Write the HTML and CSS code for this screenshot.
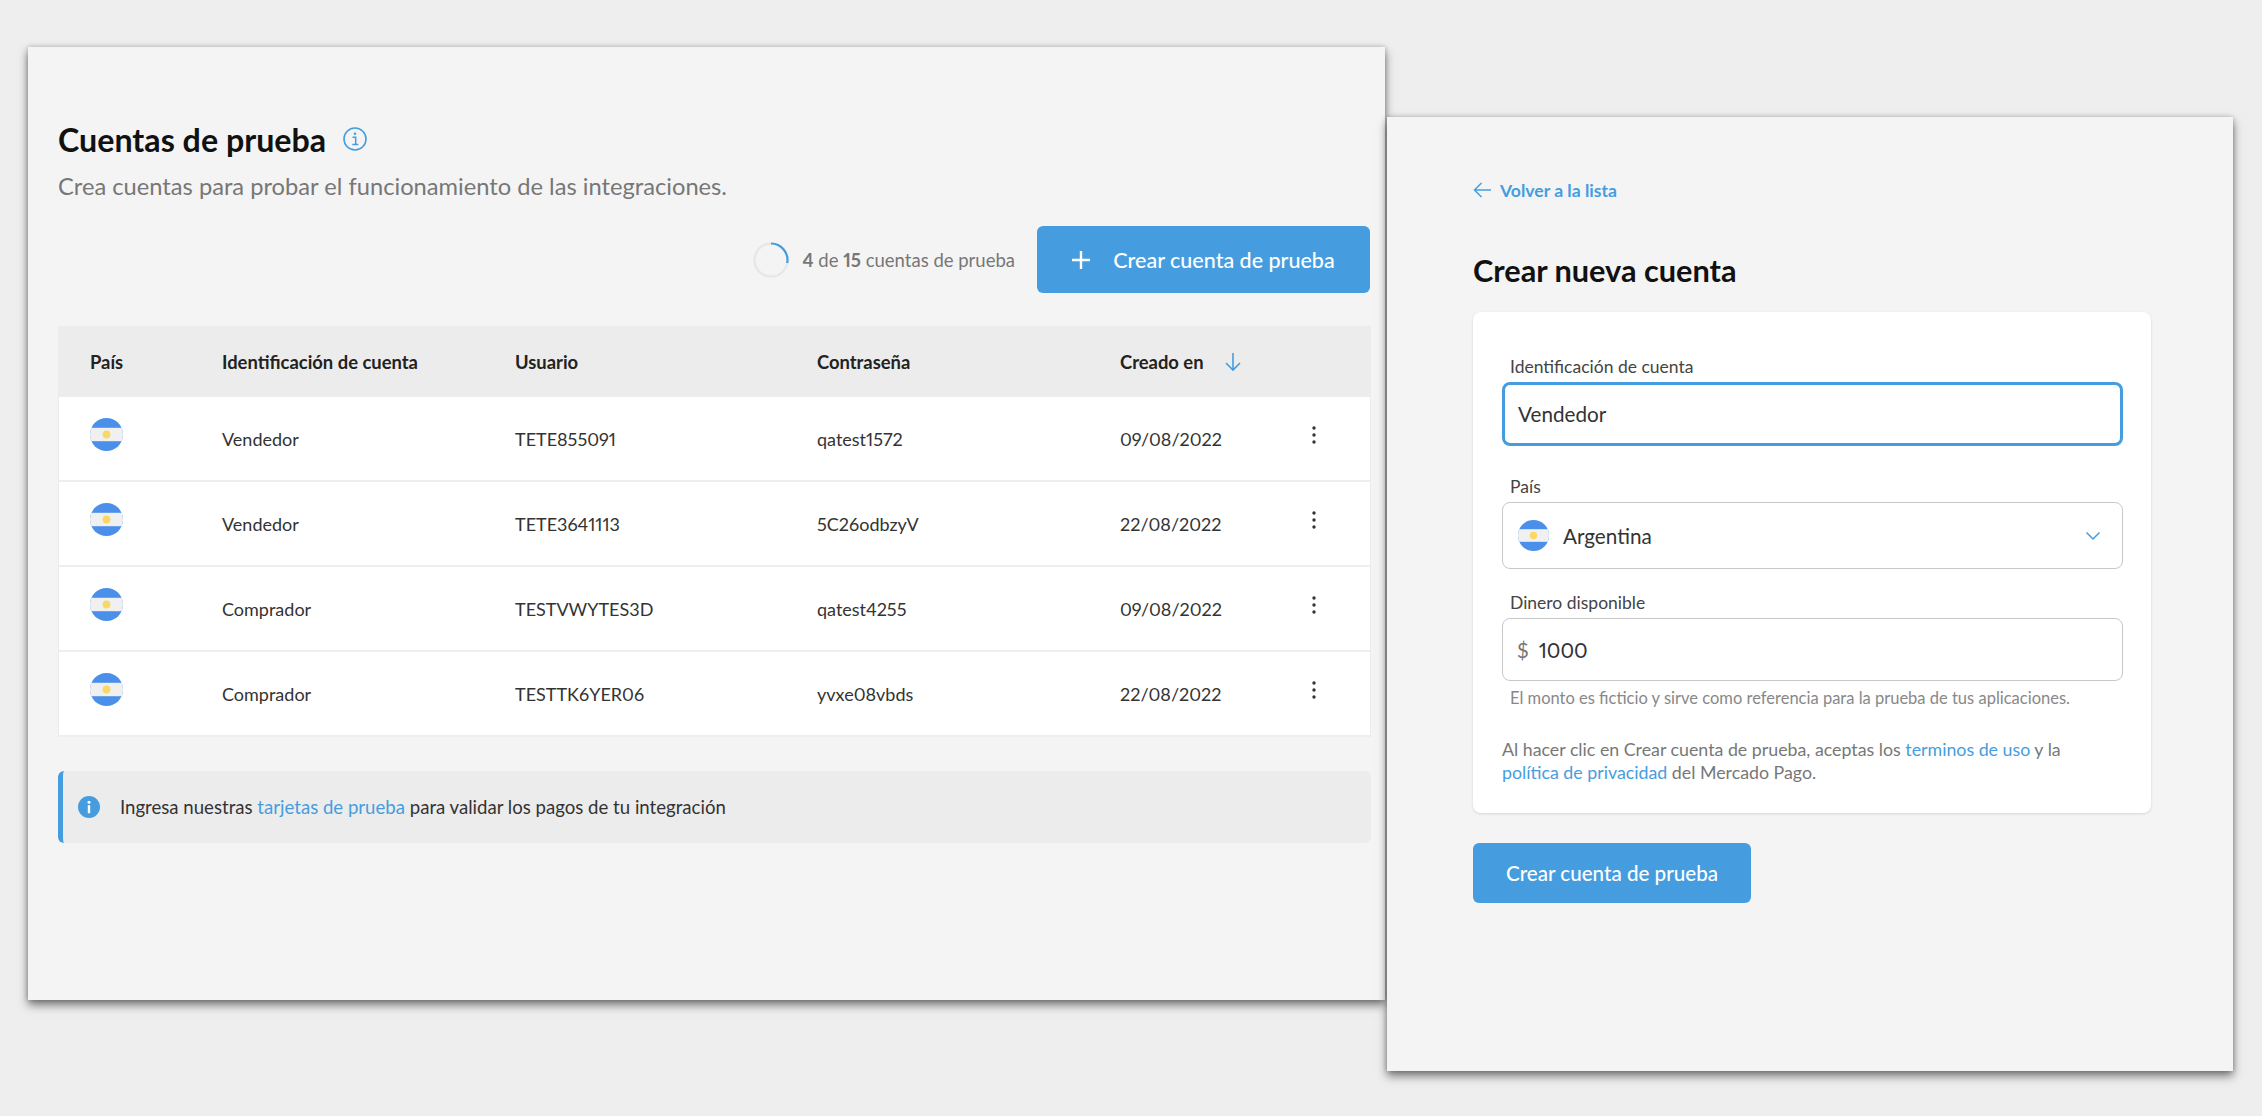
FILE: index.html
```html
<!DOCTYPE html>
<html lang="es">
<head>
  <meta charset="UTF-8">
  <title>Cuentas de prueba</title>
  <link rel="stylesheet" href="styles.css">
</head>
<body>
  <svg class="sprite" width="0" height="0">
    <symbol id="flag" viewBox="0 0 32 32">
      <clipPath id="flagClip"><circle cx="16" cy="16" r="16"/></clipPath>
      <g clip-path="url(#flagClip)">
        <rect width="32" height="32" fill="#4a8fe9"/>
        <rect y="9.500" width="32" height="13" fill="#f0f0f0"/>
      </g>
      <circle cx="16" cy="16" r="3.8" fill="#fbd765"/>
    </symbol>
    <symbol id="dots" viewBox="0 0 16 24">
      <circle cx="8" cy="5" r="1.700"/>
      <circle cx="8" cy="12" r="1.700"/>
      <circle cx="8" cy="19" r="1.700"/>
    </symbol>
  </svg>

  <section class="window window-list">
    <div class="title-row">
      <h1>Cuentas de prueba</h1>
      <svg class="info-outline" viewBox="0 0 24 24" width="24" height="24">
        <circle cx="12" cy="12" r="11" fill="none" stroke="#459ddf" stroke-width="1.6"/>
        <circle cx="12" cy="6.8" r="1.3" fill="#459ddf"/>
        <path d="M9.5 10.2h3.2v7.2M9.3 17.6h6" fill="none" stroke="#459ddf" stroke-width="1.5"/>
      </svg>
    </div>
    <p class="subtitle">Crea cuentas para probar el funcionamiento de las integraciones.</p>

    <div class="actions">
      <svg class="progress" viewBox="0 0 36 36" width="36" height="36">
        <circle cx="18" cy="18" r="16.5" fill="none" stroke="#e6e6e6" stroke-width="2.2"/>
        <path d="M18 1.5A16.5 16.5 0 0 1 34.2 21" fill="none" stroke="#459ddf" stroke-width="2.2"/>
      </svg>
      <span class="count"><b>4</b> de <b>15</b> cuentas de prueba</span>
      <button class="btn btn-add">
        <svg viewBox="0 0 18 18" width="18" height="18">
          <path d="M9 0v18M0 9h18" stroke="#fff" stroke-width="2.4"/>
        </svg>
        Crear cuenta de prueba
      </button>
    </div>

    <div class="table">
      <div class="row head">
        <span>País</span>
        <span>Identificación de cuenta</span>
        <span>Usuario</span>
        <span>Contraseña</span>
        <span class="sort">Creado en
          <svg viewBox="0 0 18 20" width="18" height="20">
            <path d="M9 1v17M2 11l7 7 7-7" fill="none" stroke="#459ddf" stroke-width="1.6"/>
          </svg>
        </span>
        <span></span>
      </div>
      <div class="row">
        <svg class="flag"><use href="#flag"/></svg>
        <span>Vendedor</span><span>TETE855091</span><span>qatest1572</span><span>09/08/2022</span>
        <svg class="dots"><use href="#dots"/></svg>
      </div>
      <div class="row">
        <svg class="flag"><use href="#flag"/></svg>
        <span>Vendedor</span><span>TETE3641113</span><span>5C26odbzyV</span><span>22/08/2022</span>
        <svg class="dots"><use href="#dots"/></svg>
      </div>
      <div class="row">
        <svg class="flag"><use href="#flag"/></svg>
        <span>Comprador</span><span>TESTVWYTES3D</span><span>qatest4255</span><span>09/08/2022</span>
        <svg class="dots"><use href="#dots"/></svg>
      </div>
      <div class="row">
        <svg class="flag"><use href="#flag"/></svg>
        <span>Comprador</span><span>TESTTK6YER06</span><span>yvxe08vbds</span><span>22/08/2022</span>
        <svg class="dots"><use href="#dots"/></svg>
      </div>
    </div>

    <div class="notice">
      <svg viewBox="0 0 22 22" width="22" height="22">
        <circle cx="11" cy="11" r="11" fill="#459ddf"/>
        <circle cx="11" cy="6.3" r="1.5" fill="#fff"/>
        <rect x="9.8" y="9.2" width="2.4" height="8" fill="#fff"/>
      </svg>
      <p>Ingresa nuestras <a href="#">tarjetas de prueba</a> para validar los pagos de tu integración</p>
    </div>
  </section>

  <section class="window window-form">
    <a class="back" href="#">
      <svg viewBox="0 0 18 16" width="18" height="16">
        <path d="M18 8H1.5M8.5 1l-7 7 7 7" fill="none" stroke="#459ddf" stroke-width="1.5"/>
      </svg>
      Volver a la lista
    </a>
    <h2>Crear nueva cuenta</h2>

    <form class="card">
      <label class="field-label">Identificación de cuenta</label>
      <div class="input input-focus">Vendedor</div>

      <label class="field-label">País</label>
      <div class="input input-select">
        <svg class="flag-select"><use href="#flag"/></svg>
        <span class="select-value">Argentina</span>
        <svg viewBox="0 0 16 10" width="16" height="10">
          <path d="M1.5 1.5L8 8l6.500-6.500" fill="none" stroke="#459ddf" stroke-width="1.5"/>
        </svg>
      </div>

      <label class="field-label">Dinero disponible</label>
      <div class="input input-money"><span class="currency">$</span>1000</div>
      <p class="hint">El monto es ficticio y sirve como referencia para la prueba de tus aplicaciones.</p>

      <p class="terms">Al hacer clic en Crear cuenta de prueba, aceptas los <a href="#">terminos de uso</a> y la <a href="#">política de privacidad</a> del Mercado Pago.</p>
    </form>

    <button class="btn btn-create">Crear cuenta de prueba</button>
  </section>
</body>
</html>
```

FILE: styles.css
```css
* {
  box-sizing: border-box;
}
body {
  margin: 0;
  width: 2262px;
  height: 1116px;
  overflow: hidden;
  position: relative;
  background: #eeeeee;
  font-family: Lato, "Open Sans", sans-serif;
  font-variant-numeric: proportional-nums;
  color: #333;
}
a {
  color: #459ddf;
  text-decoration: none;
}
.sprite {
  position: absolute;
}

/* windows sit on a free canvas */
.window {
  position: absolute;
  background: #f4f4f4;
  box-shadow: 0 5px 9px rgba(0, 0, 0, 0.5), 0 0 5px rgba(0, 0, 0, 0.2);
}
.window-list {
  left: 28px;
  top: 47px;
  width: 1357px;
  height: 953px;
  padding: 74px 14px 0 30px;
}
.window-form {
  left: 1387px;
  top: 117px;
  width: 846px;
  height: 954px;
  padding: 60px 82px 0 86px;
}

.title-row {
  display: flex;
  align-items: center;
  gap: 17px;
  height: 36px;
}
h1 {
  margin: 0;
  font-size: 32.2px;
  font-weight: 700;
  color: #111;
}
.subtitle {
  margin: 15px 0 0;
  height: 28px;
  line-height: 28px;
  font-size: 23.7px;
  color: #777;
}

.actions {
  display: flex;
  align-items: center;
  justify-content: flex-end;
  margin-top: 26px;
  padding-right: 1px;
  height: 67px;
}
.progress {
  margin-right: 13px;
}
.count {
  font-size: 18.5px;
  color: #777;
  margin-right: 22px;
}
.btn {
  display: flex;
  align-items: center;
  justify-content: center;
  border: none;
  border-radius: 6px;
  background: #459ddf;
  color: #fff;
  font-family: inherit;
  font-weight: 500;
}
.btn-add {
  width: 333px;
  height: 67px;
  gap: 23px;
  font-size: 21.5px;
}
.btn-create {
  width: 278px;
  height: 60px;
  margin-top: 30px;
  font-size: 20.6px;
}

.table {
  margin-top: 33px;
  width: 1313px;
  background: #fff;
  border: solid #ececec;
  border-width: 0 1px;
}
.row {
  display: grid;
  grid-template-columns: 132px 293px 302px 303px 186px 16px;
  align-items: center;
  height: 85px;
  padding-left: 31px;
  font-size: 18px;
  color: #333;
  border-bottom: 2px solid #eeeeee;
}
.head {
  height: 71px;
  background: #ececec;
  font-size: 18.4px;
  font-weight: 700;
  color: #222;
  border-bottom: none;
}
.sort {
  display: flex;
  align-items: center;
  gap: 20px;
}
.flag {
  width: 33px;
  height: 33px;
  margin-bottom: 8px;
}
.dots {
  width: 16px;
  height: 24px;
  margin-bottom: 7px;
  fill: #333;
}

.notice {
  display: flex;
  align-items: center;
  gap: 20px;
  margin-top: 34px;
  width: 1313px;
  height: 72px;
  padding-left: 15px;
  background: #ececec;
  border-left: 5px solid #459ddf;
  border-radius: 6px;
}
.notice p {
  margin: 0;
  font-size: 18.6px;
  color: #333;
}

.back {
  display: flex;
  align-items: center;
  gap: 9px;
  height: 26px;
  font-size: 17.6px;
  font-weight: 700;
}
h2 {
  margin: 49px 0 0;
  height: 38px;
  line-height: 38px;
  font-size: 30.7px;
  font-weight: 700;
  color: #111;
}
.card {
  margin-top: 22px;
  width: 678px;
  height: 501px;
  padding: 42px 28px 0 29px;
  background: #fff;
  border-radius: 8px;
  box-shadow: 0 1px 3px rgba(0, 0, 0, 0.12);
}
.field-label {
  display: block;
  height: 28px;
  line-height: 26px;
  padding-left: 8px;
  font-size: 17.5px;
  color: #444;
}
.input {
  display: flex;
  align-items: center;
  border: 1.5px solid #c8c8c8;
  border-radius: 8px;
  font-size: 20.7px;
  color: #333;
  padding-left: 14px;
}
.input-focus {
  height: 64px;
  margin-bottom: 28px;
  border: 3px solid #459ddf;
  padding-left: 13px;
}
.input-select {
  height: 67px;
  margin-bottom: 21px;
  padding: 0 21px 0 15px;
}
.flag-select {
  width: 31px;
  height: 31px;
  margin-right: 14px;
}
.select-value {
  flex: 1;
}
.input-money {
  height: 63px;
}
.currency {
  color: #777;
  margin-right: 10px;
}
.hint {
  margin: 6px 0 0;
  padding-left: 8px;
  height: 22px;
  line-height: 22px;
  font-size: 16.5px;
  color: #888;
}
.terms {
  margin: 29px 0 0;
  max-width: 590px;
  font-size: 17.8px;
  line-height: 23px;
  color: #777;
}
```
